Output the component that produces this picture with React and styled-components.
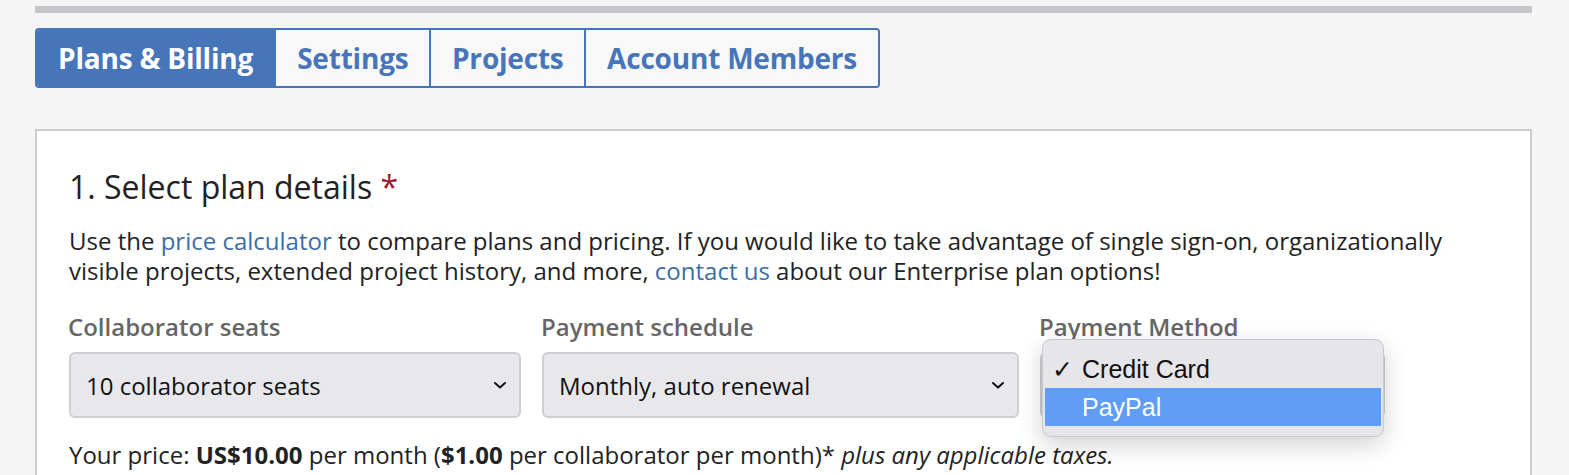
import React from 'react';
import styled, { createGlobalStyle } from 'styled-components';

const GlobalStyle = createGlobalStyle`
  body {
    margin: 0;
    background: #f5f5f5;
    font-family: "Open Sans", "Noto Sans", sans-serif;
    color: #222;
  }
`;

const Page = styled.div`
  padding: 6px 37px 0 35px;
  height: 475px;
  overflow: hidden;
  box-sizing: border-box;
`;

const TopBar = styled.div`
  height: 7px;
  background: #c5c5cc;
`;

const Tabs = styled.nav`
  display: inline-flex;
  margin-top: 15px;
  border: 2px solid #4676b9;
  border-radius: 4px;
  overflow: hidden;
`;

const Tab = styled.a`
  display: flex;
  align-items: center;
  height: 56px;
  padding: 0 ${(p) => p.$pad}px;
  font-size: 28px;
  font-weight: 700;
  color: ${(p) => (p.$active ? '#fff' : '#4676b9')};
  background: ${(p) => (p.$active ? '#4676b9' : '#f8f8f8')};
  border-left: ${(p) => (p.$first ? 'none' : '2px solid #4676b9')};
  letter-spacing: -0.2px;
  text-decoration: none;
`;

const Card = styled.section`
  margin-top: 41px;
  background: #fff;
  border: 2px solid #cccccc;
  padding: 38px 32px 40px 32px;
`;

const Heading = styled.h2`
  margin: 0;
  font-size: 32px;
  font-weight: 400;
  line-height: 36px;
  color: #222;
`;

const Required = styled.span`
  color: #9b1c2c;
`;

const Intro = styled.p`
  margin: 21px 0 0;
  font-size: 24px;
  line-height: 30px;
  color: #222;
`;

const Link = styled.a`
  color: #3a6ea5;
  text-decoration: none;
`;

const Fields = styled.div`
  display: flex;
  gap: 21px;
  margin-top: 27px;
`;

const Field = styled.div`
  position: relative;
  width: ${(p) => p.$width}px;
  display: flex;
  flex-direction: column;
  gap: 11px;
`;

const Label = styled.label`
  font-size: 24px;
  font-weight: 600;
  line-height: 28px;
  color: #666;
  margin-left: -1px;
`;

const SelectBox = styled.div`
  height: 66px;
  box-sizing: border-box;
  border: 2px solid #cfcfd3;
  border-radius: 6px;
  background: #e8e8ec;
  display: flex;
  align-items: center;
  justify-content: space-between;
  padding: 0 12px 0 15px;
  font-size: 24px;
  color: #111;
`;

const Popup = styled.div`
  position: absolute;
  top: 26px;
  left: 2px;
  width: 342px;
  box-sizing: border-box;
  padding: 10px 2px;
  background: #e6e5ea;
  border: 1px solid #c9c8cd;
  border-radius: 9px;
  box-shadow: 0 8px 24px rgba(0, 0, 0, 0.18);
  font-family: "Liberation Sans", Arial, sans-serif;
  font-size: 25px;
`;

const Option = styled.div`
  height: 38px;
  display: flex;
  align-items: center;
  padding-left: 7px;
  color: ${(p) => (p.$hl ? '#fff' : '#111')};
  background: ${(p) => (p.$hl ? '#5f9df7' : 'transparent')};
`;

const Check = styled.span`
  width: 30px;
  display: inline-block;
`;

const Price = styled.p`
  margin: 22px 0 0;
  font-size: 24px;
  line-height: 30px;
  color: #222;
`;

function Chevron() {
  return (
    <svg width="14" height="10" viewBox="0 0 14 10">
      <path d="M2 3l5 4.5L12 3" fill="none" stroke="#111" strokeWidth="2" strokeLinecap="round" strokeLinejoin="round" />
    </svg>
  );
}

export default function App() {
  return (
    <Page>
      <GlobalStyle />
      <TopBar />
      <Tabs>
        <Tab $active $first $pad={21}>Plans &amp; Billing</Tab>
        <Tab $pad={21}>Settings</Tab>
        <Tab $pad={20.5}>Projects</Tab>
        <Tab $pad={21}>Account Members</Tab>
      </Tabs>
      <Card>
        <Heading>
          1. Select plan details <Required>*</Required>
        </Heading>
        <Intro>
          Use the <Link href="#">price calculator</Link> to compare plans and pricing. If you would like to take
          advantage of single sign-on, organizationally visible projects, extended project history, and more,{' '}
          <Link href="#">contact us</Link> about our Enterprise plan options!
        </Intro>
        <Fields>
          <Field $width={452}>
            <Label>Collaborator seats</Label>
            <SelectBox>
              10 collaborator seats
              <Chevron />
            </SelectBox>
          </Field>
          <Field $width={477}>
            <Label>Payment schedule</Label>
            <SelectBox>
              Monthly, auto renewal
              <Chevron />
            </SelectBox>
          </Field>
          <Field $width={345}>
            <Label>Payment Method</Label>
            <SelectBox>
              Credit Card
              <Chevron />
            </SelectBox>
            <Popup>
              <Option>
                <Check>✓</Check>Credit Card
              </Option>
              <Option $hl>
                <Check />PayPal
              </Option>
            </Popup>
          </Field>
        </Fields>
        <Price>
          Your price: <b>US$10.00</b> per month (<b>$1.00</b> per collaborator per month)*{' '}
          <i>plus any applicable taxes.</i>
        </Price>
      </Card>
    </Page>
  );
}
